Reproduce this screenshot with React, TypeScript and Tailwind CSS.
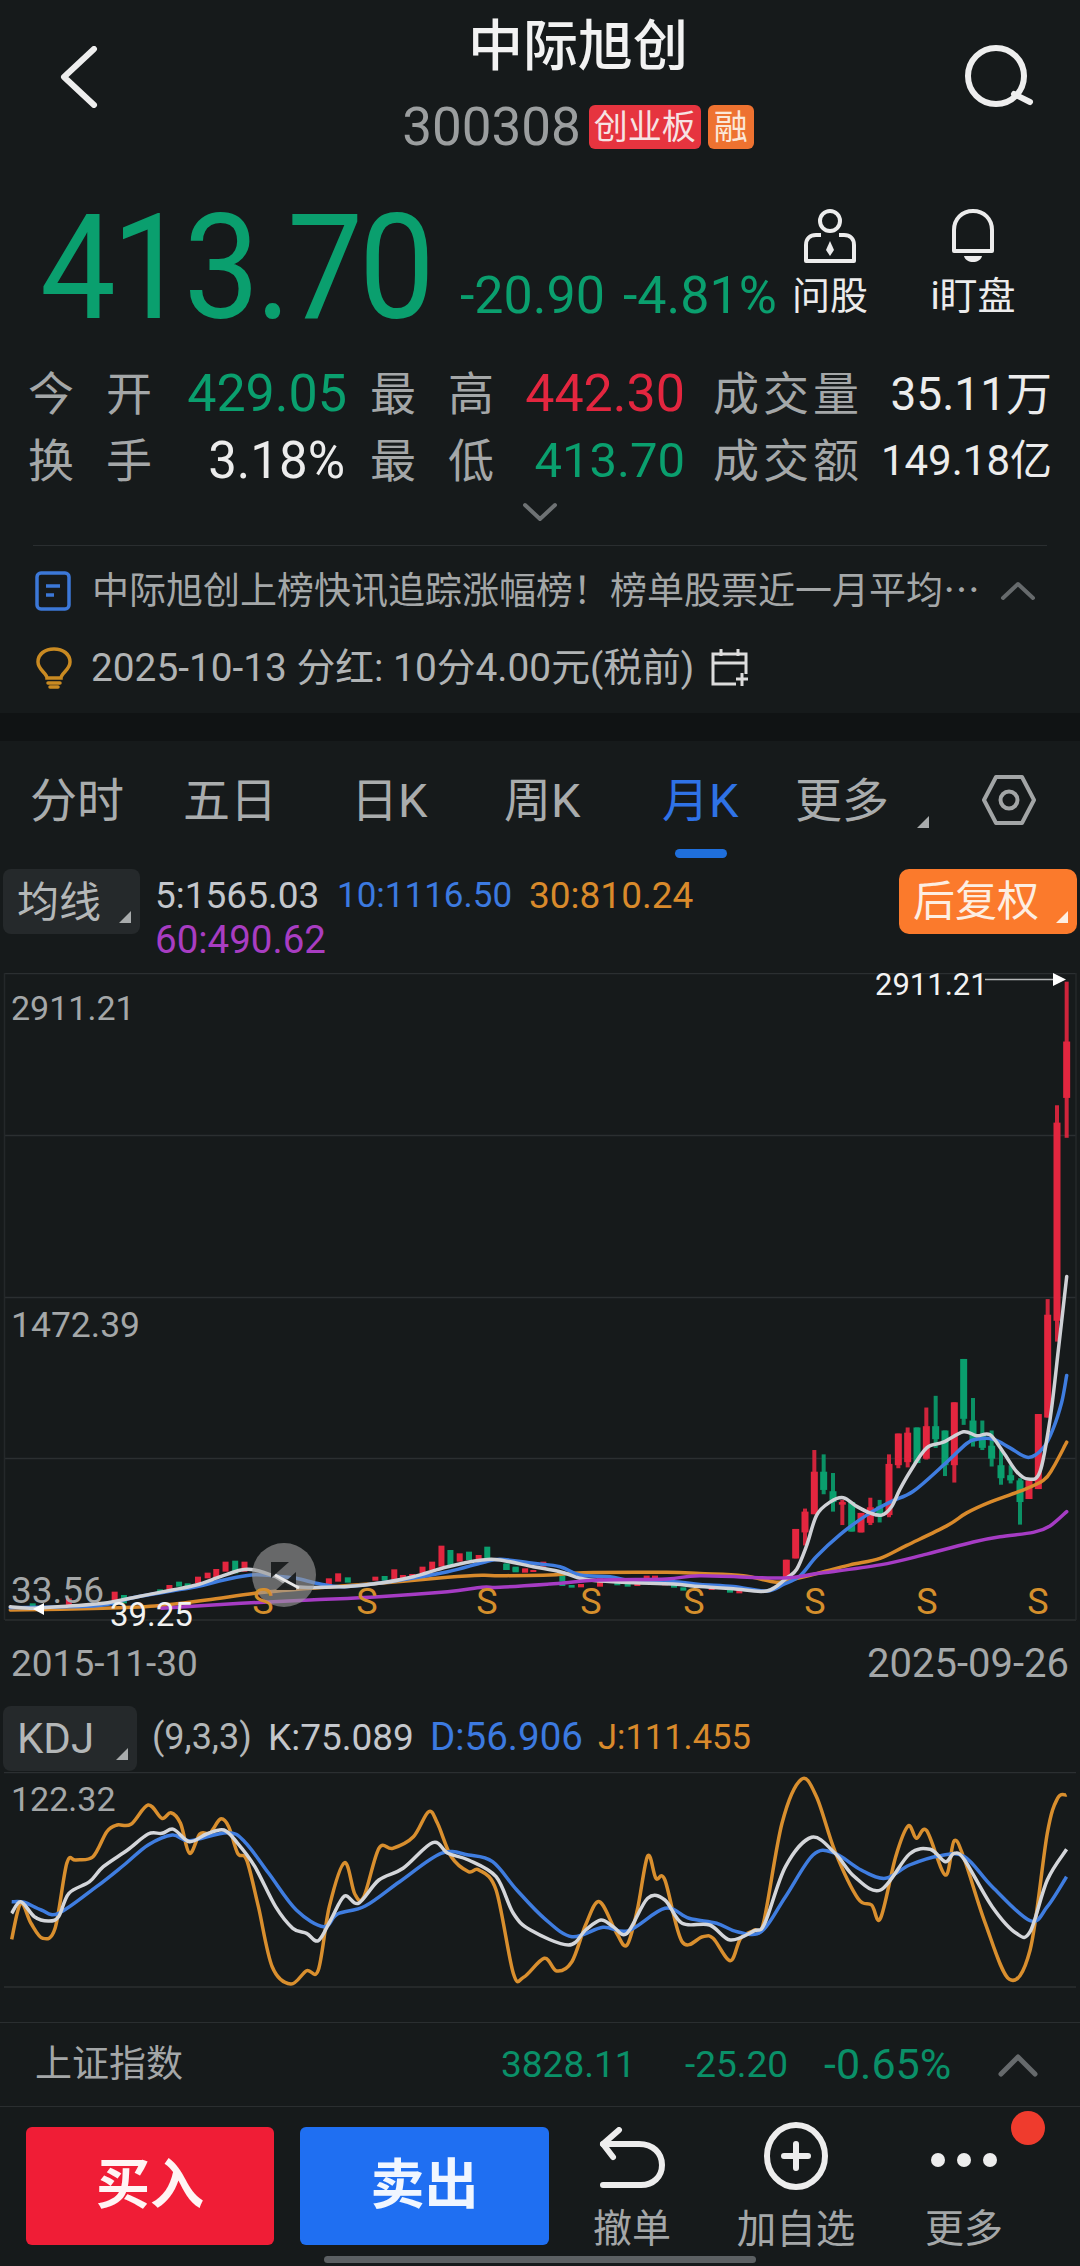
import React from "react";

type P = [number, number];
const z3 = (p: P[]): P[] => p.map(([x, y]) => [x / 2.904, 1340 + y / 3]);
const z7 = (p: P[]): P[] => p.map(([x, y]) => [500 + x / 3, 1510 + y / 3]);
const z4 = (p: P[]): P[] => p.map(([x, y]) => [700 + x / 3, 960 + y / 2.306]);
const z5 = (p: P[]): P[] => p.map(([x, y]) => [x * 0.689, 1690 + y / 3]);

function smooth(pts: P[]): string {
  let d = `M${pts[0][0].toFixed(1)} ${pts[0][1].toFixed(1)}`;
  for (let i = 0; i < pts.length - 1; i++) {
    const p0 = pts[Math.max(i - 1, 0)];
    const p1 = pts[i];
    const p2 = pts[i + 1];
    const p3 = pts[Math.min(i + 2, pts.length - 1)];
    const c1x = p1[0] + (p2[0] - p0[0]) / 6;
    const c1y = p1[1] + (p2[1] - p0[1]) / 6;
    const c2x = p2[0] - (p3[0] - p1[0]) / 6;
    const c2y = p2[1] - (p3[1] - p1[1]) / 6;
    d += `C${c1x.toFixed(1)} ${c1y.toFixed(1)} ${c2x.toFixed(1)} ${c2y.toFixed(1)} ${p2[0].toFixed(1)} ${p2[1].toFixed(1)}`;
  }
  return d;
}

const RED = "#e3263f";
const GREEN = "#0a9f6e";

const whiteLine: P[] = [
  ...z3([[30,800],[100,805],[200,798],[300,790],[400,770],[500,750],[570,735],[640,710],[700,690],[740,690],[800,710],[860,740],[1000,740],[1100,730],[1200,710],[1300,680],[1400,660]]),
  ...z7([[0,150],[100,170],[180,185],[240,205],[300,213],[400,218],[520,222]]),
  ...z4([[0,1445],[100,1450],[200,1455],[260,1425],[290,1405],[320,1350],[350,1280],[390,1250],[430,1240],[470,1260],[510,1275],[545,1280],[575,1260],[600,1220],[630,1180],[680,1125],[730,1112],[790,1088],[830,1097],[870,1095],[910,1135],[950,1180],[985,1197],[1020,1180],[1050,1060],[1075,900],[1100,730]]),
];
const blueLine: P[] = [
  ...z3([[30,803],[200,800],[300,795],[400,770],[570,740],[650,720],[730,705],[800,708],[860,715],[930,732],[1000,740],[1150,722],[1300,695],[1400,668]]),
  ...z7([[0,148],[100,160],[180,170],[240,195],[330,200],[400,213],[520,215]]),
  ...z4([[0,1440],[100,1445],[200,1455],[250,1440],[300,1420],[350,1375],[420,1325],[500,1280],[570,1250],[640,1225],[730,1165],[800,1115],[830,1105],[880,1105],[930,1125],[985,1147],[1030,1125],[1060,1080],[1085,1020],[1100,958]]),
];
const orangeLine: P[] = [
  ...z3([[30,810],[300,805],[450,798],[600,780],[740,760],[900,745],[1100,730],[1300,712],[1400,706]]),
  ...z7([[0,197],[150,195],[250,188],[500,187]]),
  ...z4([[0,1415],[130,1420],[230,1435],[280,1428],[350,1415],[450,1395],[540,1380],[620,1350],[740,1305],[800,1275],[870,1250],[960,1225],[1030,1200],[1060,1170],[1100,1112]]),
];
const purpleLine: P[] = [
  ...z3([[470,805],[700,790],[900,780],[1100,770],[1300,755],[1400,742]]),
  ...z7([[0,232],[150,222],[300,210],[500,207]]),
  ...z4([[0,1420],[250,1425],[350,1415],[540,1395],[680,1370],[820,1342],[900,1330],[1000,1320],[1050,1305],[1100,1272]]),
];

type C = [number, number, number, number, number, boolean];
const bigCandles: C[] = [
  [1100,50,410,188,318,true],[1071,335,880,375,832,true],[1043,782,1055,818,1055,true],[1015,1047,1220,1047,1220,true],[987,1200,1243,1200,1243,true],
  [960,1195,1302,1200,1250,false],[932,1165,1207,1188,1200,false],[903,1130,1210,1165,1195,false],[875,1085,1168,1120,1150,false],[847,1062,1130,1095,1125,false],
  [819,1010,1122,1062,1110,false],[791,920,1072,920,1058,false],[763,1020,1205,1020,1165,true],[735,1085,1190,1085,1165,false],[707,1005,1125,1075,1105,false],
  [679,1032,1152,1075,1150,true],[651,1078,1160,1078,1160,false],[623,1078,1170,1090,1158,true],[595,1092,1172,1092,1165,true],[567,1140,1285,1162,1280,true],
  [539,1245,1297,1260,1280,false],[511,1240,1303,1262,1298,true],[483,1275,1320,1275,1320,true],[455,1250,1318,1250,1318,false],[427,1245,1303,1250,1256,true],
  [399,1183,1272,1225,1250,false],[371,1140,1232,1180,1222,false],[343,1130,1278,1180,1278,true],[315,1265,1350,1272,1320,true],[287,1312,1380,1312,1380,true],[259,1383,1425,1383,1425,true],
];
const smallZ3: [number, number, number, boolean][] = [
  [95,790,805,false],[200,775,795,true],[333,755,790,true],[360,765,790,false],[465,748,760,false],[492,735,750,true],[520,725,740,false],[545,730,740,false],[575,710,730,true],[603,698,715,true],[628,687,715,true],[655,665,695,true],[683,662,700,false],[710,665,695,true],
  [955,715,735,true],[982,700,725,true],[1010,712,728,false],[1090,710,722,true],[1117,708,722,false],[1145,688,720,true],[1170,705,715,true],[1197,702,712,true],[1227,680,700,true],[1255,665,690,true],[1282,617,680,true],[1308,630,680,false],[1335,640,665,true],[1362,635,660,false],[1390,645,660,true],[1415,620,655,false],[1470,672,690,false],[1497,682,695,false],[1525,685,695,true],
];
const smallZ7: [number, number, number, boolean][] = [
  [20,160,180,false],[47,170,187,false],[75,178,188,true],[100,180,186,true],[130,155,170,true],[187,195,215,false],[187,220,228,false],[215,225,233,false],[243,222,232,true],[300,205,230,true],[352,218,226,false],[383,220,230,false],[412,222,228,true],[440,197,205,true],[465,197,205,true],[495,220,226,true],[522,215,233,false],[550,232,242,false],[635,236,240,true],[690,238,248,false],[718,240,250,true],
];

const jLine = z5([[17,748],[30,640],[45,700],[62,745],[80,715],[97,520],[110,510],[135,500],[155,425],[170,405],[190,403],[215,345],[235,385],[248,368],[262,400],[275,490],[290,432],[305,428],[320,387],[332,410],[345,490],[358,510],[375,650],[395,830],[422,882],[445,842],[462,840],[478,650],[500,518],[515,612],[528,620],[550,475],[570,475],[600,440],[622,365],[635,400],[655,500],[680,545],[695,540],[720,600],[745,850],[760,862],[790,805],[808,843],[830,815],[850,705],[870,635],[895,730],[910,765],[925,660],[940,498],[952,565],[965,570],[990,755],[1020,740],[1035,745],[1060,812],[1075,745],[1095,720],[1108,700],[1135,400],[1163,268],[1185,320],[1212,485],[1245,625],[1265,645],[1278,685],[1300,500],[1318,408],[1330,445],[1345,422],[1372,555],[1385,452],[1400,510],[1430,700],[1465,868],[1495,780],[1520,430],[1535,325],[1548,315]]);
const kLine = z5([[17,670],[30,635],[50,680],[70,693],[85,680],[100,610],[130,575],[150,530],[185,480],[215,432],[235,430],[252,418],[275,455],[300,432],[325,420],[345,460],[370,530],[400,650],[425,715],[445,730],[462,752],[480,690],[500,618],[520,640],[550,570],[585,535],[628,458],[650,490],[680,510],[720,560],[745,670],[770,720],[825,765],[850,720],[872,690],[890,710],[910,730],[940,625],[965,630],[990,700],[1030,705],[1060,750],[1095,722],[1110,700],[1140,530],[1178,442],[1212,490],[1240,560],[1278,600],[1320,492],[1350,478],[1372,515],[1385,490],[1400,510],[1440,650],[1475,730],[1495,725],[1520,570],[1548,478]]);
const dLine = z5([[17,635],[35,637],[60,660],[85,670],[140,590],[180,525],[215,465],[250,435],[275,452],[330,428],[355,455],[390,550],[430,660],[470,710],[490,672],[530,648],[580,575],[640,490],[680,495],[715,515],[750,600],[790,685],[830,740],[875,712],[912,722],[965,655],[1000,685],[1040,700],[1070,725],[1105,725],[1140,620],[1180,495],[1210,488],[1250,540],[1285,565],[1320,525],[1365,497],[1400,500],[1440,590],[1495,692],[1520,650],[1548,560]]);

function Corner({ color = "#a8abac" }: { color?: string }) {
  return (
    <svg width="14" height="14" viewBox="0 0 14 14" className="absolute right-[8px] bottom-[10px]">
      <path d="M13 1V13H1Z" fill={color} />
    </svg>
  );
}

function Stat({ label, value, color, labelW, valueW, ml, size }: { label: string[]; value: string; color: string; labelW: string; valueW: string; ml: string; size: string }) {
  return (
    <div className={`flex items-center ${ml}`}>
      <div className={`flex justify-between text-[#a4a7a8] text-[46px] leading-none ${labelW}`}>
        {label.map((c) => (
          <span key={c}>{c}</span>
        ))}
      </div>
      <div className={`text-right leading-none ${valueW} ${size}`} style={{ color }}>
        {value}
      </div>
    </div>
  );
}

export default function App() {
  return (
    <div
      className="relative w-[1080px] h-[2266px] overflow-hidden bg-[#161a1b] text-white flex flex-col"
      style={{ fontFamily: 'Roboto, "Noto Sans CJK SC", sans-serif' }}
    >
      {/* Header */}
      <div className="flex h-[162px] shrink-0">
        <div className="w-[200px] pl-[60px] pt-[46px]">
          <svg width="38" height="62" viewBox="0 0 38 62" fill="none" stroke="#eeeeee" strokeWidth="6" strokeLinecap="round" strokeLinejoin="round">
            <path d="M34 3L4 31L34 59" />
          </svg>
        </div>
        <div className="flex-1 flex flex-col items-center">
          <div className="h-[92px] flex items-center text-[55px] font-medium leading-none text-[#f2f2f2]">中际旭创</div>
          <div className="flex items-center h-[70px]">
            <span className="text-[53px] leading-none text-[#9b9e9f]">300308</span>
            <span className="ml-[8px] w-[112px] h-[44px] rounded-[6px] bg-[#e6343f] text-[34px] leading-none flex items-center justify-center text-[#f6e3e3]">创业板</span>
            <span className="ml-[7px] w-[46px] h-[44px] rounded-[6px] bg-[#ee7230] text-[34px] leading-none flex items-center justify-center text-[#fbe7d8]">融</span>
          </div>
        </div>
        <div className="w-[124px] pl-[8px] pt-[44px]">
          <svg width="70" height="64" viewBox="0 0 70 64" fill="none" stroke="#eeeeee" strokeWidth="6" strokeLinecap="round">
            <ellipse cx="32" cy="32" rx="28" ry="28" />
            <path d="M50 50L66 58" />
          </svg>
        </div>
      </div>

      {/* Price */}
      <div className="flex h-[183px] shrink-0 relative">
        <div className="ml-[40px] mt-[40px] text-[135px] leading-[135px] tracking-[-4px] scale-y-[1.08] text-[#0a9f6e] w-[408px]">413.70</div>
        <div className="flex items-center mt-[107px] h-[54px] text-[52px] leading-none text-[#0a9f6e]">
          <span className="ml-[12px] w-[163px]">-20.90</span>
          <span>-4.81%</span>
        </div>
        <div className="absolute left-[790px] top-[47px] w-[80px] flex flex-col items-center">
          <svg width="52" height="54" viewBox="0 0 52 54" fill="none" stroke="#ececec" strokeWidth="4">
            <circle cx="26" cy="12" r="10" />
            <path d="M17 26H12C6 26 2 30 2 36V52H50V36C50 30 46 26 40 26H35" strokeLinejoin="round" />
            <path d="M26 32L22 41L26 47L30 41Z" fill="#ececec" stroke="none" />
          </svg>
          <span className="mt-[14px] text-[38px] leading-none text-[#ececec]">问股</span>
        </div>
        <div className="absolute left-[928px] top-[47px] w-[90px] flex flex-col items-center">
          <svg width="42" height="54" viewBox="0 0 42 54" fill="none" stroke="#ececec" strokeWidth="4">
            <path d="M2 42V21C2 10 10 2 21 2S40 10 40 21V42Z" strokeLinejoin="round" />
            <path d="M12 47H30C29 51 25 53 21 53S13 51 12 47Z" fill="#ececec" stroke="none" />
          </svg>
          <span className="mt-[14px] text-[38px] leading-none text-[#ececec] whitespace-nowrap">i盯盘</span>
        </div>
      </div>

      {/* Stats */}
      <div className="flex flex-col pl-[28px] h-[200px] shrink-0 relative">
        <div className="flex h-[67px] items-center mt-[15px]">
          <Stat label={["今", "开"]} value="429.05" color="#0a9f6e" labelW="w-[124px]" valueW="w-[195px]" ml="" size="text-[52px]" />
          <Stat label={["最", "高"]} value="442.30" color="#e3263f" labelW="w-[124px]" valueW="w-[191px]" ml="ml-[23px]" size="text-[52px]" />
          <Stat label={["成", "交", "量"]} value="35.11万" color="#ececec" labelW="w-[146px]" valueW="w-[193px]" ml="ml-[28px]" size="text-[46px]" />
        </div>
        <div className="flex h-[67px] items-center">
          <Stat label={["换", "手"]} value="3.18%" color="#ececec" labelW="w-[124px]" valueW="w-[193px]" ml="" size="text-[51px]" />
          <Stat label={["最", "低"]} value="413.70" color="#0a9f6e" labelW="w-[124px]" valueW="w-[191px]" ml="ml-[25px]" size="text-[49px]" />
          <Stat label={["成", "交", "额"]} value="149.18亿" color="#ececec" labelW="w-[146px]" valueW="w-[193px]" ml="ml-[28px]" size="text-[42px]" />
        </div>
        <div className="flex justify-center pr-[28px] mt-[8px]">
          <svg width="36" height="20" viewBox="0 0 36 20" fill="none" stroke="#6e7274" strokeWidth="4" strokeLinecap="round" strokeLinejoin="round">
            <path d="M3 3L18 17L33 3" />
          </svg>
        </div>
      </div>

      {/* News */}
      <div className="h-[168px] shrink-0 flex flex-col mx-[33px] border-t border-[#2a2e30]">
        <div className="flex items-center h-[88px] pt-[2px]">
          <svg width="36" height="40" viewBox="0 0 36 40" fill="none" stroke="#3c78d8" strokeWidth="3.5" className="ml-[2px]">
            <rect x="2" y="2" width="32" height="36" rx="4" />
            <path d="M11 15H25M11 24H19" />
          </svg>
          <span className="ml-[21px] w-[889px] text-[37px] leading-none text-[#a4a7a8] whitespace-nowrap">中际旭创上榜快讯追踪涨幅榜！榜单股票近一月平均⋯</span>
          <svg width="36" height="20" viewBox="0 0 36 20" fill="none" stroke="#666a6c" strokeWidth="4" strokeLinecap="round" strokeLinejoin="round" className="ml-[19px]">
            <path d="M3 17L18 3L33 17" />
          </svg>
        </div>
        <div className="flex items-center h-[68px]">
          <svg width="38" height="42" viewBox="0 0 38 42" fill="none" stroke="#c98a22" strokeWidth="3.5" className="ml-[2px]" strokeLinecap="round">
            <path d="M12 31C12 26 3 23 3 15C3 7 10 2 19 2S35 7 35 15C35 23 26 26 26 31Z" />
            <path d="M13 36H25M15 40H23" />
          </svg>
          <span className="ml-[18px] text-[38.8px] leading-none text-[#b0b3b4] whitespace-nowrap">2025-10-13 分红: 10分4.00元(税前)</span>
          <svg width="40" height="40" viewBox="0 0 40 40" fill="none" stroke="#dddddd" strokeWidth="3" className="ml-[16px]">
            <path d="M26 36H3V6H36V26" />
            <path d="M3 15H36M11 1V8M28 1V8M26 31H38M32 25V38" />
          </svg>
        </div>
      </div>

      {/* Band */}
      <div className="h-[28px] shrink-0 bg-[#101314]" />

      {/* Tabs */}
      <div className="h-[128px] shrink-0 relative flex items-center pb-[10px] text-[47px] leading-none text-[#a9acad] whitespace-nowrap">
        <span className="ml-[30px] w-[153px]">分时</span>
        <span className="w-[168px]">五日</span>
        <span className="w-[153px]">日K</span>
        <span className="w-[158px]">周K</span>
        <span className="w-[133px] text-[#2f72e6]">月K</span>
        <span className="relative w-[186px]">
          更多
          <svg width="14" height="14" viewBox="0 0 14 14" className="absolute left-[121px] top-[38px]">
            <path d="M13 1V13H1Z" fill="#a8abac" />
          </svg>
        </span>
        <svg width="56" height="52" viewBox="0 0 56 52" fill="none" stroke="#a2a5a6" strokeWidth="4">
          <path d="M15 3H41L53 26L41 49H15L3 26Z" strokeLinejoin="round" />
          <circle cx="28" cy="26" r="8.5" />
        </svg>
        <div className="absolute left-[675px] top-[108px] w-[52px] h-[9px] rounded-full bg-[#1f6fdc]" />
      </div>

      {/* MA row */}
      <div className="h-[104px] shrink-0 relative flex pl-[3px] whitespace-nowrap">
        <div className="relative w-[137px] h-[65px] rounded-[8px] bg-[#25292b] pl-[14px] pt-[2px] flex items-center text-[42px] leading-none text-[#b4b7b8]">
          均线
          <Corner />
        </div>
        <div className="ml-[15px] flex flex-col leading-none">
          <div className="flex h-[47px] mt-[3px] items-center">
            <span className="w-[182px] text-[37px] text-[#c4c7cc]">5:1565.03</span>
            <span className="w-[192px] text-[35px] text-[#3c7ae0]">10:1116.50</span>
            <span className="text-[37px] text-[#d98a2b]">30:810.24</span>
          </div>
          <div className="flex h-[42px] items-center text-[38.5px] text-[#a83dc2]">60:490.62</div>
        </div>
        <div className="absolute left-[899px] top-0 w-[178px] h-[65px] rounded-[10px] bg-[#fb7a2c] flex items-center pl-[14px] text-[42px] leading-none text-[#fdeee2]">
          后复权
          <Corner color="#fdeee2" />
        </div>
      </div>

      {/* Candle chart */}
      <div className="h-[648px] shrink-0 relative">
        <svg width="1080" height="648" viewBox="0 973 1080 648" className="block" fill="none">
          {[973.5, 1135.5, 1297.5, 1458.5, 1620].map((y) => (
            <path key={y} d="M5 0H1076" transform={`translate(0 ${y})`} stroke="#2b2f31" strokeWidth="1.5" />
          ))}
          <path d="M4.5 973V1620M1076 973V1620" stroke="#24282a" strokeWidth="1.5" />
          {smallZ3.map(([x, a, b, up], i) => {
            const [[px, y1]] = z3([[x, a]]);
            const [[, y2]] = z3([[x, b]]);
            return <rect key={i} x={px - 3} y={y1} width="6" height={y2 - y1} fill={up ? RED : GREEN} />;
          })}
          {smallZ7.map(([x, a, b, up], i) => {
            const [[px, y1]] = z7([[x, a]]);
            const [[, y2]] = z7([[x, b]]);
            return <rect key={i} x={px - 3} y={y1} width="6" height={y2 - y1} fill={up ? RED : GREEN} />;
          })}
          {bigCandles.map(([x, wt, wb, bt, bb, up], i) => {
            const [[px, y1]] = z4([[x, wt]]);
            const [[, y2]] = z4([[x, wb]]);
            const [[, y3]] = z4([[x, bt]]);
            const [[, y4]] = z4([[x, bb]]);
            const c = up ? RED : GREEN;
            return (
              <g key={i}>
                <rect x={px - 2} y={y1} width="4" height={y2 - y1} fill={c} opacity="0.9" />
                <rect x={px - 3.5} y={y3} width="7" height={y4 - y3} fill={c} />
              </g>
            );
          })}
          <path d={smooth(orangeLine)} stroke="#d98a2b" strokeWidth="3.5" strokeLinecap="round" />
          <path d={smooth(blueLine)} stroke="#3f7de0" strokeWidth="3.5" strokeLinecap="round" />
          <path d={smooth(whiteLine)} stroke="#cfd1d6" strokeWidth="3.5" strokeLinecap="round" />
          <path d={smooth(purpleLine)} stroke="#a63cc4" strokeWidth="3.5" strokeLinecap="round" />
          <circle cx="284" cy="1575" r="32" fill="#9a9a9a" opacity="0.62" />
          <path d="M271 1562H289L271 1578Z M296 1572V1590H276Z" fill="#15181a" opacity="0.9" />
          <path d="M275 1575L299 1588" stroke="#e8e8e8" strokeWidth="3" />
          <path d="M985 979.5H1054" stroke="#b4b6b7" strokeWidth="1.5" />
          <path d="M1053 973V986L1066 979.5Z" fill="#ffffff" />
          <path d="M44 1603V1615L33 1609Z" fill="#ffffff" />
        </svg>
        {[263, 367, 487, 591, 694, 815, 927, 1038].map((x) => (
          <span key={x} className="absolute top-[611px] w-[24px] text-center text-[36px] leading-none text-[#d58f2c]" style={{ left: x - 12 }}>
            S
          </span>
        ))}
        <span className="absolute left-[11px] top-[18px] text-[34px] leading-none text-[#a4a7a8]">2911.21</span>
        <span className="absolute left-[11px] top-[335px] text-[35.5px] leading-none text-[#a4a7a8]">1472.39</span>
        <span className="absolute left-[11px] top-[599px] text-[37px] leading-none text-[#a4a7a8]">33.56</span>
        <span className="absolute left-[110px] top-[625px] text-[33px] leading-none text-[#f2f2f2]">39.25</span>
        <span className="absolute left-[875px] top-[-4px] text-[31px] leading-none text-[#f2f2f2]">2911.21</span>
      </div>

      {/* Dates */}
      <div className="h-[85px] shrink-0 flex items-center justify-between pl-[11px] pr-[11px] leading-none text-[#a4a7a8]">
        <span className="text-[37px]">2015-11-30</span>
        <span className="text-[40px]">2025-09-26</span>
      </div>

      {/* KDJ head */}
      <div className="h-[66px] shrink-0 flex pl-[3px] whitespace-nowrap">
        <div className="relative w-[134px] h-[65px] rounded-[8px] bg-[#25292b] pl-[14px] flex items-center text-[42px] leading-none text-[#b4b7b8]">
          KDJ
          <Corner />
        </div>
        <div className="ml-[15px] h-[62px] flex items-center leading-none">
          <span className="w-[116px] text-[36px] text-[#b4b7b8]">(9,3,3)</span>
          <span className="w-[162px] text-[37px] text-[#c4c7cc]">K:75.089</span>
          <span className="w-[168px] text-[38.5px] text-[#3c7ae0]">D:56.906</span>
          <span className="text-[34.5px] text-[#d98a2b]">J:111.455</span>
        </div>
      </div>

      {/* KDJ chart */}
      <div className="h-[216px] shrink-0 relative">
        <svg width="1080" height="216" viewBox="0 1772 1080 216" className="block" fill="none">
          <path d="M4 1772.5H1076M4 1987H1076" stroke="#2b2f31" strokeWidth="1.5" />
          <path d={smooth(jLine)} stroke="#d98f2e" strokeWidth="3.5" strokeLinejoin="round" />
          <path d={smooth(dLine)} stroke="#3f7de0" strokeWidth="3.5" />
          <path d={smooth(kLine)} stroke="#d4d6da" strokeWidth="3.5" />
        </svg>
        <span className="absolute left-[11px] top-[10px] text-[34px] leading-none text-[#a4a7a8]">122.32</span>
      </div>

      {/* Index row */}
      <div className="mt-[34px] h-[85px] shrink-0 border-y border-[#2a2e30] flex items-center leading-none whitespace-nowrap">
        <span className="ml-[35px] w-[466px] text-[37px] text-[#a4a7a8]">上证指数</span>
        <span className="w-[184px] text-[37px] text-[#0a9068]">3828.11</span>
        <span className="w-[139px] text-[37px] text-[#0a9068]">-25.20</span>
        <span className="w-[174px] text-[43px] text-[#0a9068]">-0.65%</span>
        <svg width="40" height="24" viewBox="0 0 40 24" fill="none" stroke="#666a6c" strokeWidth="5" strokeLinecap="round" strokeLinejoin="round">
          <path d="M3 21L20 4L37 21" />
        </svg>
      </div>

      {/* Bottom bar */}
      <div className="flex-1 relative flex pt-[20px] pl-[26px] whitespace-nowrap">
        <div className="w-[248px] h-[118px] rounded-[6px] bg-[#f01d36] flex items-center justify-center text-[54px] font-bold leading-none text-[#fff4f4]">买入</div>
        <div className="ml-[26px] w-[249px] h-[118px] rounded-[6px] bg-[#1f6ff2] flex items-center justify-center text-[54px] font-bold leading-none text-[#f0f6ff]">卖出</div>
        <div className="ml-[43px] w-[80px] flex flex-col items-center relative">
          <svg width="66" height="62" viewBox="0 0 66 62" fill="none" stroke="#ededed" strokeWidth="6" strokeLinecap="round" strokeLinejoin="round">
            <path d="M20 3L4 17L14 30" />
            <path d="M4 17H40C54 17 63 26 63 38C63 50 54 58 42 58H4" />
          </svg>
          <span className="mt-[21px] text-[39px] leading-none text-[#a4a7a8]">撤单</span>
        </div>
        <div className="ml-[62px] w-[124px] flex flex-col items-center mt-[-5px]">
          <svg width="66" height="68" viewBox="0 0 66 68" fill="none" stroke="#ededed" strokeWidth="6" strokeLinecap="round">
            <ellipse cx="33" cy="34" rx="29" ry="31" />
            <path d="M21 34H45M33 22V46" />
          </svg>
          <span className="mt-[20px] text-[39.5px] leading-none text-[#a4a7a8]">加自选</span>
        </div>
        <div className="ml-[61px] w-[90px] flex flex-col items-center pt-[24px]">
          <svg width="68" height="18" viewBox="0 0 68 18" fill="#ededed">
            <circle cx="8" cy="9" r="7" />
            <circle cx="34" cy="9" r="7" />
            <circle cx="60" cy="9" r="7" />
          </svg>
          <span className="mt-[41px] text-[39px] leading-none text-[#a4a7a8]">更多</span>
        </div>
        <div className="absolute left-[1011px] top-[4px] w-[34px] h-[34px] rounded-full bg-[#ef3b2d]" />
        <div className="absolute left-[324px] top-[149px] w-[432px] h-[7px] rounded-full bg-[#5c6063]" />
      </div>
    </div>
  );
}
